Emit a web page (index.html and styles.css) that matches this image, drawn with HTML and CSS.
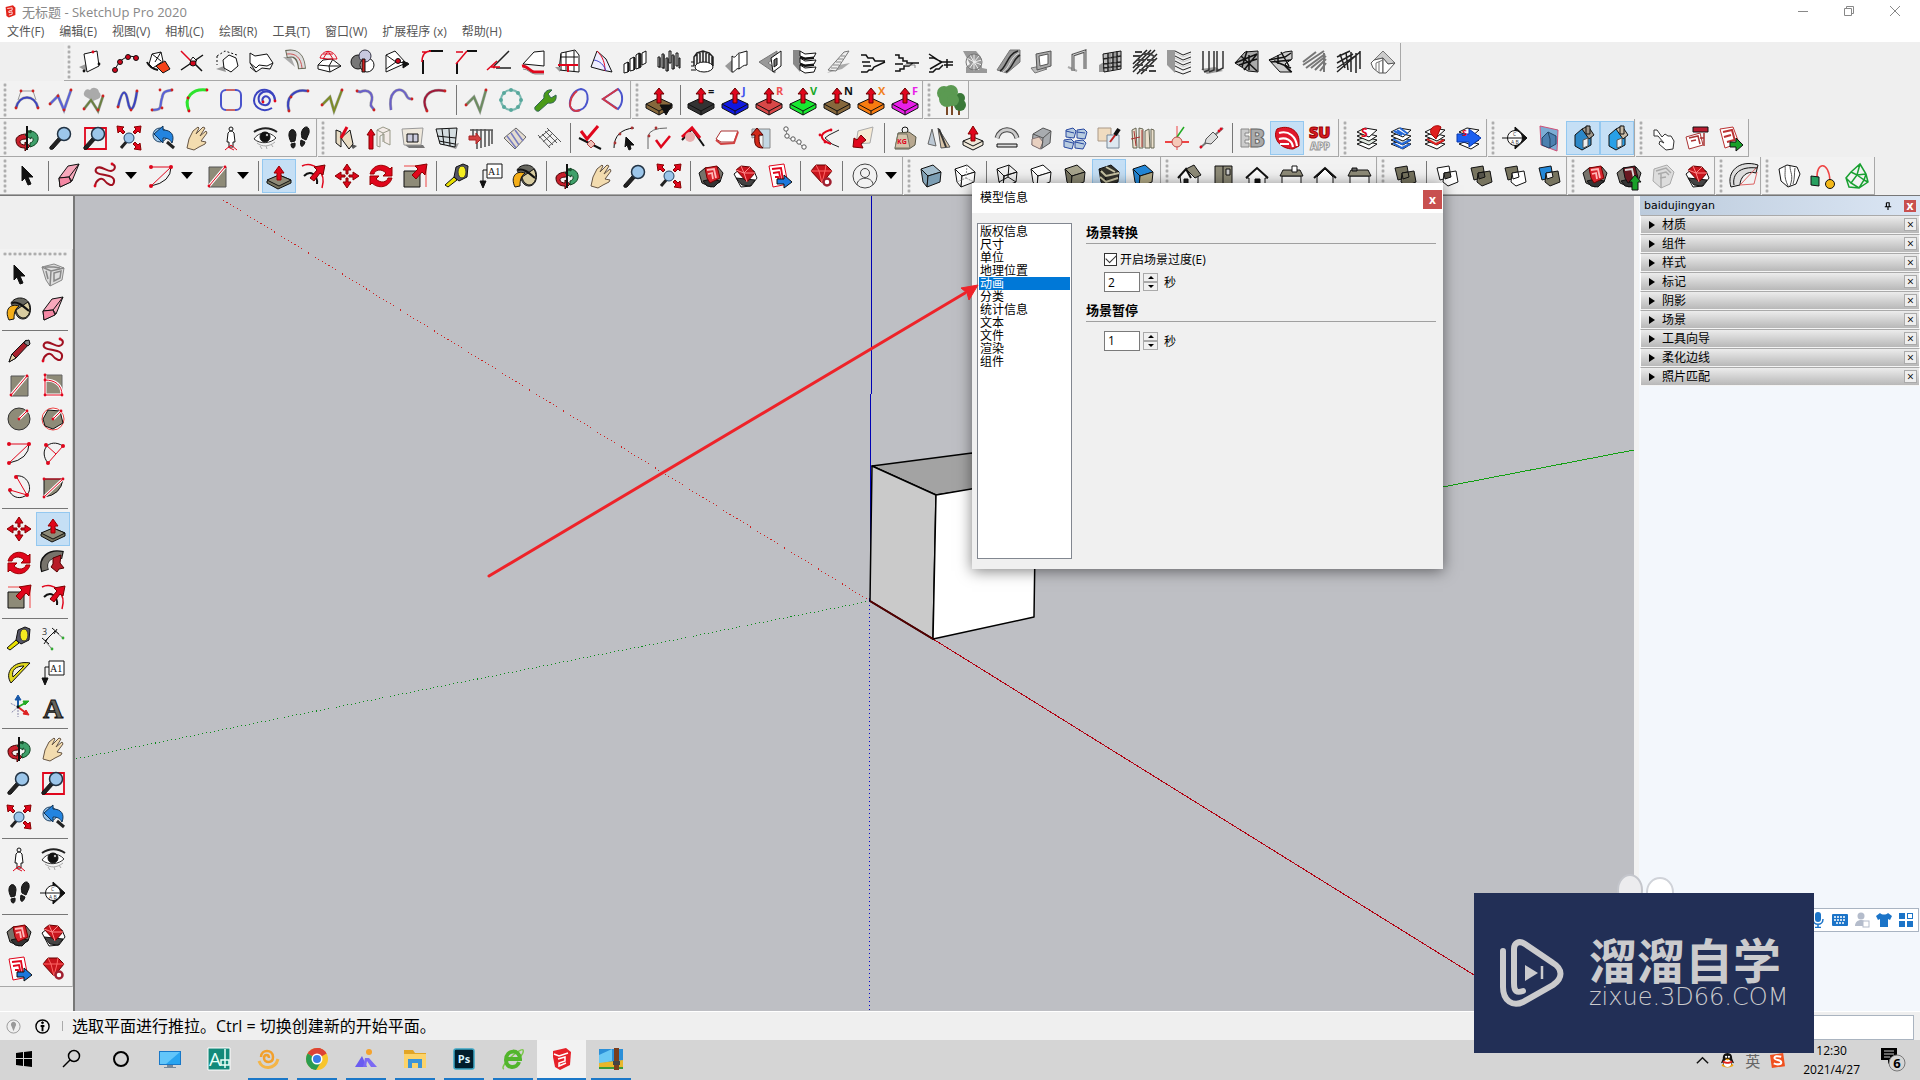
FILE: index.html
```html
<!DOCTYPE html>
<html lang="zh-CN">
	<head>
		<meta charset="utf-8">
		<title>无标题 - SketchUp Pro 2020</title>
		<link rel="stylesheet" href="styles.css">
	</head>
	<body>
		<header class="titlebar">
			<svg class="app-logo" viewBox="0 0 16 16"><path d="M2 3l9-2 3 3v9l-8 3-3-2z" fill="#e2231a"/><path d="M4 5l6-1v3l-4 1v2l4-1v3l-4 1" fill="none" stroke="#fff" stroke-width="1"/></svg>
			<h1 class="app-title">无标题 - SketchUp Pro 2020</h1>
			<div class="window-buttons">
				<button aria-label="最小化"><svg viewBox="0 0 12 12"><path d="M1 6.500h10"/></svg></button>
				<button aria-label="还原"><svg viewBox="0 0 12 12"><path d="M1.500 3.500h7v7h-7zM3.500 3.500v-2h7v7h-2"/></svg></button>
				<button aria-label="关闭"><svg viewBox="0 0 12 12"><path d="M1 1l10 10M11 1L1 11"/></svg></button>
			</div>
		</header>
		<nav class="menubar">
			<button>文件(F)</button>
			<button>编辑(E)</button>
			<button>视图(V)</button>
			<button>相机(C)</button>
			<button>绘图(R)</button>
			<button>工具(T)</button>
			<button>窗口(W)</button>
			<button>扩展程序 (x)</button>
			<button>帮助(H)</button>
		</nav>

		<!-- data-tools: icon names, | is a separator, * marks an active tool, + a drop-down -->
		<div class="toolbars">
			<div class="toolbar-row indented">
				<div class="toolbar" data-tools="sheet nodes fold crossing hexdash slab tube dome sphere cone fillet chamfer angle bend frame sail columns posts ring curtain wallwindow shelves ramp stair1 stair2 stair3 spiralstair escalator screen arch lattice weave louver blinds truss truss2 rafters beams hut"></div>
			</div>
			<div class="toolbar-row">
				<div class="toolbar" data-tools="bezarc polyline cloudline bspline sline greenarc roundrect spiral bluearc olive hook hump redarc | tealline dotring wrench loop wedge"></div>
				<div class="toolbar" data-tools="jpp | jppnormal jppj jppr jppv jppn jppx jppf"></div>
				<div class="toolbar" data-tools="trees"></div>
			</div>
			<div class="toolbar-row">
				<div class="toolbar" data-tools="orbit zoom zoomwindow zoomextents previous pan camera eye walk"></div>
				<div class="toolbar" data-tools="wallcut wallup opening grid fence corrugated rail | checkcorner nodecurve checkround roofpeak redslab bendup chain redbend reddown | weight fin pushup bridge crystal boxes picker books axispick brush | bim wifi* suapp"></div>
				<div class="toolbar" data-tools="layers layersblue layersred layersgo"></div>
				<div class="toolbar" data-tools="section sectionplane sectioncut* sectionfill*"></div>
				<div class="toolbar" data-tools="hand report reportgo"></div>
			</div>
			<div class="toolbar-row">
				<div class="toolbar" data-tools="select | eraser freehand+ arc+ rectangle+ | pushpull* offset move rotate scale | tape text paint | orbit pan zoom zoomextents | warehouse ruby layout | extension | user+"></div>
				<div class="toolbar" data-tools="xray backedges | wireframe hidden shaded textured* mono"></div>
				<div class="toolbar" data-tools="iso top front right back left"></div>
				<div class="toolbar" data-tools="outer | intersect union subtract trim"></div>
				<div class="toolbar" data-tools="warehouse warehouseup component ruby"></div>
				<div class="toolbar" data-tools="rotarc"></div>
				<div class="toolbar" data-tools="shell link gem"></div>
			</div>
		</div>

		<div class="workspace">
			<aside class="side-tools">
				<div class="toolbar vertical" data-tools="select component2 paint eraser | pencil freehand rectangle rotrect circle polygon arc arc2 arc3 pie | move pushpull* rotate followme scale offset | tape dimension protractor text axes text3d | orbit pan zoom zoomwindow zoomextents previous | camera eye walk section | warehouse ruby layout extension"></div>
			</aside>

			<main class="viewport">
				<svg viewBox="75 196 1559 815" preserveAspectRatio="xMidYMid slice">
					<g fill="none" shape-rendering="crispEdges">
						<path d="M870 601L223 200" stroke="#c22" stroke-dasharray="1 3"/>
						<path d="M870 601L75 759" stroke="#0a8a1a" stroke-dasharray="1 3"/>
						<path d="M870 601L869 1011" stroke="#00c" stroke-dasharray="1 3"/>
						<path d="M872 196L870 601" stroke="#0000b4"/>
						<path d="M1034 566L1634 450" stroke="#12a012"/>
						<path d="M933 639L1532 1011" stroke="#b00010"/>
					</g>
					<g stroke="#000" stroke-width="1.500" stroke-linejoin="round">
						<path d="M872 466L972 453L1038 480L936 495z" fill="#a3a3a3"/>
						<path d="M872 466L936 495L933 639L870 601z" fill="#cacaca"/>
						<path d="M936 495L1036 478L1034 617L933 639z" fill="#fff"/>
					</g>
					<path d="M870 601l63 38" stroke="#500" stroke-width="2"/>
				</svg>
			</main>

			<aside class="tray">
				<div class="tray-header">
					<h2>baidujingyan</h2>
					<button class="pin" aria-label="固定"><svg viewBox="0 0 10 10"><path d="M3 1v5M6.500 1v5M3 1h4M1 6h8M5 6v4" fill="none" stroke="#000" stroke-width="1.400"/></svg></button>
					<button class="tray-close">x</button>
				</div>
				<div class="tray-item"><button>材质</button><button class="item-close">×</button></div>
				<div class="tray-item"><button>组件</button><button class="item-close">×</button></div>
				<div class="tray-item"><button>样式</button><button class="item-close">×</button></div>
				<div class="tray-item"><button>标记</button><button class="item-close">×</button></div>
				<div class="tray-item"><button>阴影</button><button class="item-close">×</button></div>
				<div class="tray-item"><button>场景</button><button class="item-close">×</button></div>
				<div class="tray-item"><button>工具向导</button><button class="item-close">×</button></div>
				<div class="tray-item"><button>柔化边线</button><button class="item-close">×</button></div>
				<div class="tray-item"><button>照片匹配</button><button class="item-close">×</button></div>
			</aside>
		</div>

		<footer class="statusbar">
			<svg class="status-icon" viewBox="0 0 16 16" stroke="#999"><circle cx="8" cy="8" r="7" fill="none"/><path d="M8 3a3 3 0 0 1 2 5l-2 5-2-5a3 3 0 0 1 2-5z" fill="#999" stroke="none"/></svg>
			<svg class="status-icon" viewBox="0 0 16 16" stroke="#000"><circle cx="8" cy="8" r="7" fill="none" stroke-width="1.500"/><path d="M8 7v6M6 7.500h4" stroke-width="2" fill="none"/><circle cx="8" cy="4" r="1" fill="#000"/></svg>
			<p>选取平面进行推拉。Ctrl = 切换创建新的开始平面。</p>
			<input class="measure" type="text" aria-label="数值">
		</footer>

		<footer class="taskbar">
			<button class="task" aria-label="开始"><svg viewBox="0 0 24 24"><path d="M4 6l7-1v6H4zM12 5l8-1v7h-8zM4 12h7v7l-7-1zM12 12h8v8l-8-1z" fill="#000"/></svg></button>
			<button class="task" aria-label="搜索"><svg viewBox="0 0 24 24" fill="none" stroke="#000" stroke-width="1.500"><circle cx="14" cy="9" r="5.500"/><path d="M10 13l-7 7"/></svg></button>
			<button class="task" aria-label="Cortana"><svg viewBox="0 0 24 24"><circle cx="12" cy="12" r="7" fill="none" stroke="#000" stroke-width="2"/></svg></button>
			<button class="task" aria-label="此电脑"><svg viewBox="0 0 24 24"><path d="M1 4h22v14H1z" fill="#1878c8"/><path d="M2 5h20v12H2z" fill="#28a4f0"/><path d="M2 5h20L8 17H2z" fill="#62c6fa"/><path d="M9 18h6v2H9zM6 20h12v1H6z" fill="#789"/></svg></button>
			<button class="task" aria-label="CAD"><svg viewBox="0 0 24 24"><path d="M1 1h22v22H1z" fill="#128a7a" stroke="#fff"/><text x="2" y="19" font-size="19" fill="#e8fff8">A</text><path d="M18 2v19M14 13h8v5h-8z" fill="none" stroke="#e8fff8" stroke-width="1.500"/></svg></button>
			<button class="task open" aria-label="浏览器"><svg viewBox="0 0 24 24" fill="none" stroke="#f2a02c" stroke-width="2.500"><path d="M5 10c0-8 12-8 12 0 0 7-9 6-9 1 0-4 5-4 5 0"/><path d="M3 14c3 9 16 9 19-2" stroke="#f4b548" stroke-width="3"/></svg></button>
			<button class="task open" aria-label="Chrome"><svg viewBox="0 0 24 24"><circle cx="12" cy="12" r="11" fill="#f8c52c"/><path d="M12 12L2.500 6.500A11 11 0 0 1 21.500 6.500z" fill="#dd4236"/><path d="M12 1a11 11 0 0 1 9.500 5.500H12z" fill="#dd4236"/><path d="M2.500 6.500A11 11 0 0 0 11 23l5-8-4-3z" fill="#2a9c50"/><circle cx="12" cy="12" r="5.500" fill="#fff"/><circle cx="12" cy="12" r="4" fill="#3b7ce8"/></svg></button>
			<button class="task open" aria-label="看图"><svg viewBox="0 0 24 24"><path d="M1 20L8 9l5 11z" fill="#6a5cf0"/><path d="M9 20l2-9h4l8 9h-6l-4-6-1 6z" fill="#7c6af4"/><circle cx="15" cy="5" r="3" fill="#f5a32c"/></svg></button>
			<button class="task open" aria-label="文件资源管理器"><svg viewBox="0 0 24 24"><path d="M1 3h9l2 3h11v14H1z" fill="#e2a526"/><path d="M1 7h22v14H1z" fill="#fcd36a"/><path d="M5 21v-9h14v9h-4v-5H9v5z" fill="#3d94d8"/></svg></button>
			<button class="task open" aria-label="Photoshop"><svg viewBox="0 0 24 24"><rect x="2" y="2" width="20" height="20" rx="2" fill="#001d2c" stroke="#3aa5c4" stroke-width="1.500"/><text x="12" y="16" text-anchor="middle" font-size="11" font-weight="bold" fill="#d9f4ff">Ps</text></svg></button>
			<button class="task open" aria-label="360浏览器"><svg viewBox="0 0 24 24" fill="none"><path d="M3 22C-3 20 20 0 22 3c1 2-2 6-4 8" stroke="#7cc84c" stroke-width="1.500"/><path d="M6 12h13c0-10-14-10-14 1 0 9 11 9 13 2" stroke="#52b52c" stroke-width="4"/></svg></button>
			<button class="task open active" aria-label="SketchUp"><svg viewBox="0 0 24 24"><path d="M3 4l13-3 5 4-1 13-10 5-5-3-2-10z" fill="#e62129"/><path d="M4 7l5 2 9-3M8 12l7-2v4l-6 2v3l7-3" fill="none" stroke="#fff" stroke-width="1.500"/></svg></button>
			<button class="task open" aria-label="截图"><svg viewBox="0 0 24 24"><path d="M0 2h24v20H0z" fill="#2b8fd8"/><path d="M0 8L13 2v12L0 17z" fill="#69c8f5"/><path d="M0 16l24-3v9H0z" fill="#e8b72c"/><path d="M0 20h24v2H0z" fill="#3a9a3a"/><path d="M15 1h5v22h-5z" fill="#7a3d1c"/><path d="M14 14h7v4h-7z" fill="#444"/></svg></button>
			<div class="tray-icons">
				<button aria-label="显示隐藏的图标"><svg viewBox="0 0 16 16"><path d="M2 11l6-6 6 6" fill="none" stroke="#111" stroke-width="1.500"/></svg></button>
				<button aria-label="QQ"><svg viewBox="0 0 16 16"><ellipse cx="8" cy="13" rx="6" ry="2.500" fill="#f5a30a"/><path d="M8 0c4 0 5 3 5 6l2 5-2-1c-1 6-9 6-10 0l-2 1 2-5c0-3 1-6 5-6z" fill="#111"/><ellipse cx="8" cy="11" rx="4" ry="4" fill="#fff"/><path d="M3 8c3 2 7 2 10 0v2c-3 2-7 2-10 0z" fill="#e2231a"/><circle cx="6.500" cy="4" r="1.200" fill="#fff"/><circle cx="9.500" cy="4" r="1.200" fill="#fff"/><path d="M5 6h6l-3 2z" fill="#f5a30a"/></svg></button>
				<button class="lang">英</button>
				<button aria-label="搜狗输入法"><svg viewBox="0 0 16 16"><path d="M0 2l14-2 2 14-14 2z" fill="#f0501e"/><path d="M12 4c-4-1-8-1-7 2 1 2 7 1 7 4 0 2-4 3-8 1" fill="none" stroke="#fff" stroke-width="2.200"/></svg></button>
				<div class="clock"><time>12:30</time><time>2021/4/27</time></div>
				<button class="notify" aria-label="通知"><svg viewBox="0 0 26 26"><path d="M1 1h16v12h-5l-4 4v-4H1z" fill="#000"/><path d="M4 4h10M4 7h10M4 10h6" stroke="#ccc"/><circle cx="17" cy="16" r="8" fill="#d5d5d5" stroke="#777"/><text x="17" y="21" text-anchor="middle" font-size="13" font-weight="bold">6</text></svg></button>
			</div>
		</footer>

		<section class="dialog">
			<div class="dialog-header">
				<h2>模型信息</h2>
				<button class="dialog-close">x</button>
			</div>
			<div class="dialog-body">
				<div class="pages">
					<button>版权信息</button>
					<button>尺寸</button>
					<button>单位</button>
					<button>地理位置</button>
					<button class="selected">动画</button>
					<button>分类</button>
					<button>统计信息</button>
					<button>文本</button>
					<button>文件</button>
					<button>渲染</button>
					<button>组件</button>
				</div>
				<div class="page">
					<h3>场景转换</h3>
					<label class="check"><input type="checkbox" checked>开启场景过度(E)</label>
					<div class="field">
						<input id="transition" type="text" value="2">
						<span class="spin"><button aria-label="增加"></button><button class="down" aria-label="减少"></button></span>
						<label for="transition">秒</label>
					</div>
					<h3>场景暂停</h3>
					<div class="field pause">
						<input id="delay" type="text" value="1">
						<span class="spin"><button aria-label="增加"></button><button class="down" aria-label="减少"></button></span>
						<label for="delay">秒</label>
					</div>
				</div>
			</div>
		</section>

		<svg class="pointer" viewBox="0 0 500 300"><path d="M8 293L484 10" stroke="#ee2329" stroke-width="3" stroke-linecap="round"/><path d="M497 2l-9 15-2-7-6-5z" fill="#ee2329" stroke="#ee2329"/></svg>

		<div class="ime">
			<button aria-label="语音"><svg viewBox="0 0 16 16"><rect x="5" y="0" width="6" height="10" rx="3" fill="#1b74c8"/><path d="M3 7c0 7 10 7 10 0M8 12v3M5 15.500h6" fill="none" stroke="#1b74c8" stroke-width="1.500"/></svg></button>
			<button aria-label="键盘"><svg viewBox="0 0 16 16"><rect y="2" width="16" height="12" rx="1" fill="#1b74c8"/><path d="M2 5h12M2 8h12M4 11h8" stroke="#fff" stroke-width="1.500" stroke-dasharray="2 1"/></svg></button>
			<button aria-label="账户"><svg viewBox="0 0 16 16" fill="#b4bccb"><circle cx="7" cy="4" r="3.500"/><path d="M1 14c0-8 12-8 12 0z"/><rect x="9" y="9" width="6" height="6" fill="#fff" stroke="#b4bccb"/></svg></button>
			<button aria-label="皮肤"><svg viewBox="0 0 16 16"><path d="M4 1c2 2 6 2 8 0l4 3-2 4-2-1v8H4V7L2 8 0 4z" fill="#1b74c8"/></svg></button>
			<button aria-label="工具箱"><svg viewBox="0 0 16 16" fill="#1b74c8"><rect x="1" y="1" width="6" height="6"/><rect x="9.500" y="1.500" width="5" height="5" fill="#fff" stroke="#1b74c8"/><rect x="1" y="9" width="6" height="6"/><rect x="9" y="9" width="6" height="6"/></svg></button>
		</div>

		<div class="brand">
			<svg class="ears" viewBox="0 0 60 20"><ellipse cx="14" cy="17" rx="12" ry="15" fill="#ececee" stroke="#c4c6cc" stroke-width="2"/><ellipse cx="44" cy="19" rx="13" ry="14" fill="#fff" stroke="#d0d3d9" stroke-width="2"/></svg>
			<svg class="brand-logo" viewBox="0 0 66 68"><g fill="none" stroke="#cbcbcd" stroke-width="6" stroke-linecap="round"><path d="M4 12v36c0 14 10 20 20 15l30-17c10-7 10-16 0-22L26 5C20 1 15 4 15 10v34c0 9 3 10 9 8"/></g><path d="M26 26l13 8-13 8z" fill="#cbcbcd"/><path d="M43 27v13" stroke="#cbcbcd" stroke-width="2.500"/></svg>
			<div class="brand-text">
				<strong>溜溜自学</strong>
				<span>zixue.3D66.COM</span>
			</div>
		</div>

		<script src="icons.js"></script>
		<script src="toolbars.js"></script>
	</body>
</html>
```

FILE: styles.css
```css
* {
	box-sizing: border-box;
}

body {
	margin: 0;
	height: 100vh;
	display: flex;
	flex-direction: column;
	overflow: hidden;
	position: relative;
	background: #efefef;
	color: #000;
	font-family: "Open Sans", "Noto Sans CJK SC", sans-serif;
	font-size: 12px;
}

h1, h2, h3, p {
	margin: 0;
	font-size: 12px;
	font-weight: normal;
}

button {
	padding: 0;
	border: none;
	background: none;
	color: inherit;
	font: inherit;
}

button svg {
	display: block;
}

/* title and menu */

.titlebar {
	display: flex;
	align-items: center;
	height: 22px;
	padding: 0 19px 0 4px;
	gap: 5px;
	background: #fff;
	color: #888;
}

.app-logo {
	width: 13px;
	height: 16px;
}

.app-title {
	flex: 1;
	font-size: 13px;
}

.window-buttons {
	display: flex;
	gap: 34px;
}

.window-buttons svg {
	width: 12px;
	height: 12px;
	fill: none;
	stroke: #888;
}

.menubar {
	display: flex;
	height: 20px;
	background: #fff;
	color: #555;
}

.menubar button {
	padding: 0 8px 0 7px;
	line-height: 20px;
}

/* toolbars */

.toolbars {
	padding-top: 1px;
	border-bottom: 1px solid #777;
}

.toolbar-row {
	display: flex;
	gap: 1px;
	height: 38px;
}

.toolbar-row.indented {
	padding-left: 64px;
}

.toolbar {
	display: flex;
	align-items: center;
	background: #f2f2f2;
	border-right: 1px solid #a8a8a8;
	border-bottom: 1px solid #a8a8a8;
}

.grip {
	width: 10px;
	height: 34px;
	background: radial-gradient(circle, #aaa 1px, transparent 2px) center / 4px 5px;
	background-repeat: repeat-y;
}

.separator {
	width: 8px;
	height: 30px;
	background: linear-gradient(#777, #777) center / 1px 100% no-repeat;
}

.tool {
	display: flex;
	align-items: center;
	justify-content: center;
	width: 34px;
	height: 34px;
}

.tool svg {
	width: 24px;
	height: 24px;
	overflow: visible;
	fill: none;
	stroke: #111;
	stroke-width: 1;
}

.tool.active {
	background: #c5dff5;
	border: 1px solid #94c8f0;
}

.tool.dropdown {
	width: 56px;
	gap: 8px;
	padding-left: 2px;
}

.tool.dropdown::after {
	content: "";
	border: 6px solid transparent;
	border-top: 7px solid #000;
	border-bottom: none;
}

.toolbar.vertical {
	display: grid;
	grid-template-columns: 34px 34px;
	justify-content: center;
	margin-top: 53px;
	border-right-color: #ccc;
}

.vertical .grip {
	grid-column: 1 / 3;
	width: 66px;
	height: 9px;
	background: radial-gradient(circle, #aaa 1px, transparent 2px) center / 5px 4px;
	background-repeat: repeat-x;
}

.vertical .separator {
	grid-column: 1 / 3;
	width: 66px;
	height: 8px;
	background: linear-gradient(#777, #777) center / 100% 1px no-repeat;
}

/* workspace */

.workspace {
	flex: 1;
	min-height: 0;
	display: flex;
}

.side-tools {
	width: 73px;
}

.viewport {
	flex: 1;
	min-width: 0;
	background: #bebfc4;
	border-left: 2px solid #777;
}

.viewport svg {
	display: block;
	width: 100%;
	height: 100%;
}

.tray {
	width: 286px;
	padding-left: 6px;
	background: linear-gradient(90deg, #f2f2f2 5px, #f3f7fc 5px);
}

.tray-header {
	display: flex;
	align-items: center;
	gap: 12px;
	height: 19px;
	padding: 0 4px;
	background: linear-gradient(90deg, #bccbdc, #dbe6f4);
}

.tray-header h2 {
	flex: 1;
	font-family: "DejaVu Sans", sans-serif;
	font-size: 11px;
}

.pin svg {
	width: 8px;
	height: 10px;
}

.tray-close {
	width: 12px;
	height: 12px;
	background: #c8504f;
	color: #fff;
	font-weight: bold;
	line-height: 10px;
}

.tray-item {
	display: flex;
	align-items: center;
	justify-content: space-between;
	height: 19px;
	padding: 0 2px 0 8px;
	border: 1px solid #fff;
	border-top-color: #aaa;
	border-bottom-color: #f4f4f4;
	background: linear-gradient(#ececec, #b8b8b8);
}

.tray-item button {
	display: flex;
	align-items: center;
	gap: 7px;
	line-height: 16px;
}

.tray-item button:first-child::before {
	content: "";
	border: 4px solid transparent;
	border-left: 6px solid #000;
	border-right: none;
}

.tray-item .item-close {
	justify-content: center;
	width: 13px;
	height: 13px;
	border: 1px solid #aaa;
	background: #eee;
}

/* status bar */

.statusbar {
	display: flex;
	align-items: center;
	height: 29px;
	padding: 0 6px;
	gap: 14px;
	border-top: 1px solid #fff;
}

.status-icon {
	width: 15px;
	height: 15px;
}

.statusbar p {
	flex: 1;
	margin-left: -4px;
	padding-left: 12px;
	background: linear-gradient(#aaa, #aaa) 2px center / 1px 10px no-repeat;
	font-size: 16px;
	line-height: 24px;
}

.measure {
	width: 110px;
	height: 25px;
	border: 1px solid #aab4c0;
	background: #fff;
	align-self: flex-end;
}

/* taskbar */

.taskbar {
	display: flex;
	height: 40px;
	background: #d5d5d5;
}

.task {
	display: flex;
	align-items: center;
	justify-content: center;
	width: 49px;
	border-bottom: 2px solid transparent;
}

.task:first-child {
	width: 47px;
}

.task svg {
	width: 24px;
	height: 24px;
}

.task.open {
	background: linear-gradient(#1b78c8, #1b78c8) center bottom / 40px 2px no-repeat border-box;
}

.task.open.active {
	background: linear-gradient(#1b78c8, #1b78c8) center bottom / 49px 2px no-repeat border-box, #f2f2f2;
}

.tray-icons {
	display: flex;
	align-items: center;
	gap: 10px;
	margin-left: auto;
	padding-right: 14px;
}

.tray-icons svg {
	width: 15px;
	height: 15px;
}

.lang {
	font-size: 15px;
	color: #666;
}

.clock {
	display: flex;
	flex-direction: column;
	align-items: center;
	margin-left: 8px;
	line-height: 19px;
}

.notify {
	margin-left: 10px;
}

.tray-icons .notify svg {
	width: 26px;
	height: 26px;
}

/* model info window */

.dialog {
	position: absolute;
	left: 972px;
	top: 183px;
	width: 471px;
	height: 386px;
	display: flex;
	flex-direction: column;
	background: #f0f0f0;
	box-shadow: 0 2px 14px rgba(0, 0, 0, 0.5);
}

.dialog-header {
	display: flex;
	justify-content: space-between;
	height: 30px;
	padding: 7px 1px 0 8px;
	background: #fff;
	line-height: 15px;
}

.dialog-close {
	width: 19px;
	height: 19px;
	background: #c8504f;
	color: #fff;
	font-weight: bold;
	line-height: 16px;
}

.dialog-body {
	flex: 1;
	display: flex;
	gap: 14px;
	padding: 10px 7px 10px 5px;
}

.pages {
	width: 95px;
	padding: 1px;
	border: 1px solid #828790;
	background: #fff;
}

.pages button {
	display: block;
	width: 100%;
	height: 13px;
	padding-left: 1px;
	line-height: 13px;
	text-align: left;
}

.pages .selected {
	background: #0078d7;
	color: #fff;
}

.page {
	flex: 1;
}

.page h3 {
	height: 21px;
	border-bottom: 1px solid #a0a0a0;
	font-size: 13px;
	font-weight: bold;
	line-height: 18px;
}

.check {
	display: flex;
	align-items: center;
	gap: 3px;
	height: 28px;
	padding: 2px 0 0 18px;
}

.check input {
	appearance: none;
	width: 13px;
	height: 13px;
	margin: 0;
	border: 1px solid #333;
	background: #fff;
	display: grid;
	place-items: center;
}

.check input:checked::before {
	content: "";
	width: 9px;
	height: 5px;
	border: solid #333;
	border-width: 0 0 1px 1px;
	transform: rotate(-45deg) translate(1px, -1px);
}

.field {
	display: flex;
	align-items: center;
	gap: 3px;
	height: 29px;
	padding: 0 0 9px 18px;
}

.field.pause {
	height: 38px;
	padding-bottom: 1px;
}

.field input {
	width: 36px;
	height: 20px;
	padding: 0 3px;
	border: 1px solid #7a7a7a;
	font: inherit;
}

.field label {
	padding-left: 3px;
}

.spin {
	display: grid;
	gap: 0;
}

.spin button {
	display: grid;
	place-items: center;
	width: 15px;
	height: 9px;
	border: 1px solid #aaa;
}

.spin button::before {
	content: "";
	border: 3px solid transparent;
	border-top: none;
	border-bottom: 3px solid #000;
}

.spin .down::before {
	transform: rotate(180deg);
}

/* things floating over the window */

.pointer {
	position: absolute;
	left: 481px;
	top: 283px;
	width: 500px;
	height: 300px;
	pointer-events: none;
}

.ime {
	position: absolute;
	right: 1px;
	top: 908px;
	display: flex;
	align-items: center;
	gap: 6px;
	height: 24px;
	padding: 0 4px;
	border: 1px solid #a9b4c2;
	background: #fff;
}

.ime svg {
	width: 16px;
	height: 16px;
}

.brand {
	position: absolute;
	left: 1474px;
	top: 893px;
	width: 340px;
	height: 160px;
	display: flex;
	align-items: center;
	gap: 24px;
	padding-left: 25px;
	background: #222f56;
	color: #cbcbcd;
}

.ears {
	position: absolute;
	left: 142px;
	bottom: 100%;
	width: 60px;
	height: 20px;
}

.brand-logo {
	width: 66px;
	height: 68px;
}

.brand-text {
	display: flex;
	flex-direction: column;
}

.brand-text strong {
	font-size: 48px;
	line-height: 48px;
}

.brand-text span {
	font-family: "DejaVu Sans", sans-serif;
	font-size: 24px;
	font-weight: 200;
	line-height: 24px;
}
```

FILE: icons.js
```js
const RED = '#e0061c';
const TAUPE = '#8e8b78';

const dots = (color, ...points) => points.map(([x, y]) => `<circle cx="${x}" cy="${y}" r="1.400" fill="${color}" stroke="none"/>`).join('');
const line = (d, color = '#111', width = 1) => `<path d="${d}" stroke="${color}" stroke-width="${width}"/>`;
const shape = (d, fill, stroke = '#111') => `<path d="${d}" fill="${fill}" stroke="${stroke}"/>`;
const label = (text, x, y, size, color = '#111') => `<text x="${x}" y="${y}" font-size="${size}" font-weight="bold" fill="${color}" stroke="none">${text}</text>`;
const curve = (d, color, ...points) => line(d, '#aaa', 3) + line(d, color, 2) + dots('#c22', ...points);

// push/pull slab with a red arrow, used by the whole joint push/pull family
const slab = (color, mark = '', markColor = '#111') =>
	shape('M-1 16l13-6 13 6v4l-13 7-13-7z', color) + line('M-1 16l13 7 13-7M12 23v4') +
	shape('M12 0l5 6h-3v9h-4V6H7z', RED, '#600') + (mark && label(mark, 19, 7, 11, markColor));

const glass = shape('M1 21l9-10 3 2L4 23c-2 1-4 0-3-2z', '#222') + '<circle cx="15" cy="8" r="6.500" fill="#9cc6ea" stroke="#234" stroke-width="1.500"/>';
const sheets = (top) => shape('M2 18l8-3 12 3-8 5z', '#fff') + shape('M2 14l8-3 12 3-8 5z', '#dfe7df') + shape('M2 10l8-3 12 3-8 5z', '#fff') + shape('M2 6l8-4 12 2-8 7z', '#fff') + top;
const box = (a, b, c) => shape('M2 5l12-4 8 7-13 4z', a) + shape('M2 5l7 7-1 11-4-5z', b) + shape('M9 12l13-4-1 10-13 5z', c);
const merged = (a, b, c) => shape('M2 4l12-2 2 11-11 3z', a) + shape('M9 9l12-2 2 11-10 4-5-4z', b) + shape('M9 9l6-1 1 5-6 2z', c);
const arrowHeads = shape('M0 0l7 1-2 2 3 3-2 2-3-3-2 2zM24 0l-7 1 2 2-3 3 2 2 3-3 2 2zM24 24l-7-1 2-2-3-3 2-2 3 3 2-2z', RED, '#800');
const pod = shape('M0 9l6-5 13-1 5 6-3 9-9 5-9-4z', '#77736b') + shape('M4 17l8-2 9 2-6 6-7-1z', '#333');
const house = (roof, wall) => shape('M4 9l7-6 9 5v11l-9 5-7-4z', wall) + shape('M11 3l6-3 6 9-5 4z', roof) + shape('M15 0h4v8h-4z', roof) + shape('M12 14l5-2v8l-5 2z', '#eee', '#555');
const layoutPage = shape('M2 2l15-2 4 20-15 3z', '#fff', RED) + line('M5 5l9-1 2 12M6 9l6-1 2 9M8 13l3 0 1 5', RED, 1.8);

const icons = {
	sheet: shape('M0 17l7-3v7z', '#999', 'none') + shape('M5 4l13-3 2 15-12 6z', '#fff') + dots('#111', [5, 21], [20, 14]) + dots(RED, [14, 2]),
	nodes: line('M2 19L7 11l8-5 9 1') + '<g fill="#d0061c"><circle cx="2" cy="20" r="2.500"/><circle cx="7" cy="12" r="2.500"/><circle cx="15" cy="7" r="2.500"/><circle cx="23" cy="8" r="2.500"/></g>',
	fold: shape('M2 14L5 4l9-2 2 9-10 7z', '#fff') + line('M5 4l9 7M14 2L8 12') + line('M0 12c2 5 6 7 11 8', '#111', 2) + shape('M9 16l9-5 5 8-7 4z', '#f5431a'),
	crossing: line('M0 20L22 5M12 12l9 9', '#111', 1.5) + line('M0 1l12 12', RED, 1.5) + '<circle cx="12" cy="13" r="3" fill="#d0061c"/>' + shape('M9 11l3-4 4 4z', '#fff'),
	hexdash: shape('M1 19l8-3 2 6z', '#999', 'none') + shape('M8 10l6-5 7 3 2 8-7 6-7-4z', '#fff') + '<path d="M2 6l8-5 12 4M2 6v9" stroke-dasharray="2 2"/>',
	slab: shape('M1 13V3l5 3 12-2 6 9-3 6-8-1-6 4z', '#fff') + line('M1 13l6 5 3-3 8 1 6-3M1 17l6 5'),
	tube: shape('M0 7h8l4 10z', '#aaa', 'none') + line('M3 4c9-2 15 2 16 15', '#665', 8) + line('M4 4c9-2 14 2 15 14', '#ddd', 6) + line('M4 4c9-1 14 4 15 14', '#c55'),
	dome: shape('M1 15l5-5 9-1 9 7-11 6-12-3z', '#fff') + line('M1 15l11 1 4-7M12 16l1 6M12 16l12 0') + line('M3 8c3-9 14-9 17 1M3 8l8 1 9 0M6 9L11 1l5 8M6 4l10 0', RED),
	sphere: '<circle cx="7" cy="12" r="7" fill="#777"/><circle cx="16" cy="15" r="7" fill="#fff"/><circle cx="14" cy="6" r="6" fill="#c8c8e0" stroke="#334"/>' + shape('M11 9h3v13h-3z', '#c22'),
	cone: shape('M1 5l9-4 11 12L1 22z', '#fff') + line('M1 5l10 7 12 1M1 19l10-7') + '<circle cx="13" cy="11" r="2.500" fill="#d0061c"/>' + shape('M18 11l6 3-6 4z', '#111'),
	fillet: line('M4 24V10M10 1h14', '#111', 2) + line('M3 12Q3 1 12 1M3 2h5', RED, 1.5),
	chamfer: line('M4 24V13M14 1h10', '#111', 2) + line('M3 14L14 1M3 2h7', RED, 1.5),
	angle: line('M7 16L22 1M9 18h15', '#222', 1.5) + line('M0 20l10-9M4 17h9', RED, 1.5) + dots(RED, [7, 17]),
	bend: shape('M2 14L13 2l10-1v15l-10-1z', '#fff') + line('M1 16c5-1 8 6 12 6h10', RED, 3) + line('M2 19c5 0 8 5 12 5h9', '#888'),
	frame: shape('M4 20L6 3l14-3 4 5v17z', '#fff') + line('M6 4v16M11 2v18M19 1v20M6 7h17') + shape('M0 17h5v5z', '#999', 'none') + line('M3 15h20M13 15v7', RED, 2),
	sail: shape('M2 17L8 1l9 8 6 13-10-2z', '#eef') + line('M8 1c6 6 8 12 8 20', RED) + line('M5 10c6 1 10 5 12 11', '#44c'),
	columns: shape('M1 14l4-2v10l-4 1zM7 9l4-2v13l-4 1zM13 5l3-2v15l-3 1zM19 3l4-2v12l-4 2z', '#fff') + shape('M5 12l1 1v8l-1 1zM11 7l1 1v11l-1 1zM16 3l2 1v13l-2 1z', '#333'),
	posts: shape('M1 7h2v10H1zM5 4h2v14H5zM9 8h2v13H9zM12 1h2v12h-2zM15 5h2v14h-2zM19 3h2v13h-2zM22 8h1v10h-1z', '#ccc') + line('M3 8v10M7 5v14M11 9v12M17 6v13', '#111', 1),
	ring: line('M3 16V7l3-4 6-2 6 2 4 4v9M6 15V4M9 13V2M12 13V1M15 13V2M18 14V4M21 15V6', '#222', 1.5) + '<ellipse cx="13" cy="17" rx="9" ry="5" fill="#fff"/>' + line('M0 12h3M0 16h3M0 20h5'),
	curtain: shape('M0 16l7-6v13z', '#999', 'none') + shape('M7 6c4 4 5-4 8-3l7-2v14c-4 0-5 2-8 4-3-2-4 4-7 3z', '#fff') + line('M14 4v15'),
	wallwindow: shape('M0 12L18 1v5L9 13l7 5v5z', '#999', '#777') + shape('M12 8l10-7v15l-8 6z', '#fff') + shape('M15 10l3-2v7l-3 2z', '#777'),
	shelves: shape('M0 0h7v22L0 14z', '#888', 'none') + shape('M7 1l5 3 11-1-2 4-9 1-5-2zM7 8l5 3 11-1-2 4-9 1-5-2zM7 15l5 3 11-1-2 5-9 1-5-3z', '#fff') + line('M7 7l5 2 9-1M7 14l5 2 9-1', '#111', 2),
	ramp: shape('M12 15l11-2-8 6-15 4z', '#aaa', 'none') + shape('M1 20L17 2l5-1L9 21z', '#eee', '#777') + line('M4 18h6M6 15h6M9 12h5M11 9h5M14 6h4', '#888'),
	stair1: line('M0 5h5l2 3h5l2 3h10M0 22h6l2-2h3l2-3 11-5M1 12h8M2 16h8', '#111', 1.5),
	stair2: line('M0 5h4v3h4v3h4v2h12M0 21h5v-2h4v-3h5l4-3M0 14h8', '#111', 1.5) + line('M10 15h10v3', '#888'),
	stair3: line('M0 4l12 8h12M0 22h4l3-3h3l4-4M0 8h5l8 4-12 7M15 15h9M18 9v9', '#111', 1.5),
	spiralstair: shape('M0 1h13l5 6 1 11 5 1v4H3v-6l4-3z', '#999', 'none') + line('M11 12L4 8M11 12L7 5M11 12V4M11 12l5-6M11 12l8-2M11 12l8 3M11 12l5 8M11 12v9M11 12l-5 7', '#eee') + '<circle cx="11" cy="12" r="8" stroke="#777"/>',
	escalator: shape('M0 20L13 0h10v12L10 23z', '#999', '#777') + line('M3 21c7-4 7-17 18-20M9 22c7-4 7-13 14-17', '#222', 1.5) + line('M6 22c7-4 7-15 16-19', '#ddd'),
	screen: shape('M0 18l10-2 6 3-12 4z', '#bbb', '#777') + shape('M5 4l15-3v15L6 20z', '#aaa', '#555') + shape('M8 6l9-2v10l-8 2z', '#fff', '#555'),
	arch: line('M3 17l9 4', '#aaa', 2) + line('M8 21V5l12-4v18', '#555', 3) + line('M8 21V5l12-4v18', '#ccc'),
	lattice: shape('M0 15l5-3v10H0z', '#999', 'none') + shape('M4 4l18-3v18L5 22z', '#bbb') + line('M9 3v18M14 2v18M18 1v18M4 9l18-3M4 14l18-2M4 18l18-2', '#222', 1.5) + line('M11 3v18M16 2v18', '#777'),
	weave: line('M0 22L22 0M0 14L14 0M8 24L24 8M0 18L18 0M4 24L24 4', '#222', 1.5) + line('M0 6h8M10 4h8M4 10h8M14 10h8M2 15h8M12 16h9M6 20h8M16 21h7M16 3l6 4M2 2h7', '#444', 2),
	louver: shape('M0 0h8v23L0 15z', '#999', 'none') + line('M8 1l8 4 8-3M8 6l8 4 8-3M8 11l8 4 8-3M8 16l8 4 8-3M8 21l8 3 8-3', '#222') + line('M8 3l8 4 8-3M8 8l8 4 8-3M8 13l8 4 8-3', '#ccc'),
	blinds: shape('M0 19l14-2 8 4-16 3z', '#999', 'none') + line('M2 1v19M8 1v19l-5 2M13 1v19l-5 2M22 1v17l-6 3V1', '#333', 1.5),
	truss: shape('M0 13L10 2l13-1v21l-10-1z', '#aaa') + line('M0 13L22 4 9 20M6 6l16 15M12 1l-5 16M22 9L4 15M14 5v15', '#111', 1.5),
	truss2: shape('M0 10L16 2l7-1v8l-7 5 7 8H11z', '#ccc') + line('M0 10l16-3 6-4M5 11L22 18M9 5v9M2 12l20-2M15 15l7 7M12 2l8 14', '#111', 1.5),
	rafters: line('M0 15L21 1M3 18L22 4M8 18L23 6M12 20L23 9M17 21l6-8M21 22V3M0 12L13 2', '#777', 2),
	beams: line('M0 22L23 2M0 7L13 1M0 13L16 4M3 4l5 14M9 2l2 18M14 2v20M19 3v20M23 1v18M0 18L18 6', '#222', 1.5),
	hut: shape('M12 1l12 12-7 1-5-6-9 2z', '#ccc', '#777') + shape('M0 13l3-3 9-2v15H8l-6-5z', '#fff', '#555') + shape('M12 8l5 6 7-1-9 10h-3z', '#fff', '#555') + line('M5 13v7M5 13l7-3M8 12v11', '#777'),

	bezarc: curve('M1 20C4 6 20 6 23 20', '#3a43c0', [1, 20], [23, 20]) + line('M6 3h12M6 3l-3 9M18 3l3 9', '#999') + dots('#c22', [6, 3], [18, 3]),
	polyline: curve('M1 16l8-8 6 14L22 2', '#5860d8', [1, 16], [9, 8], [15, 22], [22, 2]),
	cloudline: shape('M3 9a4 4 0 0 1 4-7 5 5 0 0 1 9 2 4 4 0 0 1-1 7l-5 2z', '#aaa', 'none') + curve('M1 21l7-9 7 11 5-15', '#6a8040', [1, 21], [15, 22], [20, 8]),
	bspline: curve('M1 19C6-2 9 3 11 14s6 10 9-11', '#3a43c0', [1, 19], [14, 22], [20, 3]),
	sline: curve('M1 22c12 0 7-4 10-12 1-7 4-7 10-8', '#5860d8', [1, 22], [11, 20], [9, 2], [21, 2]),
	greenarc: line('M4 23C-2 9 8 0 22 2', '#2ee42e', 3) + dots(RED, [4, 23], [22, 2], [3, 10]),
	roundrect: '<rect x="2" y="2" width="20" height="20" rx="5" stroke="#4a54cc" stroke-width="2"/>' + line('M7 2h9M7 22h9', '#c66', 2),
	spiral: line('M10 14c-2-4 2-7 5-5 4 3 1 9-4 8C4 16 4 7 10 4c6-2 12 2 12 9', '#3a43c0', 2) + line('M22 13C22 0 6-2 2 8s7 18 17 12', '#3a43c0', 2) + dots(RED, [10, 14], [22, 13]),
	bluearc: curve('M2 23C-2 10 7 0 21 3', '#3a43c0', [2, 23], [4, 9], [21, 3]),
	olive: curve('M1 17l8-8 4 14L21 2', '#7c8c28', [1, 17], [21, 2]),
	hook: curve('M2 3l3 1c10-4 14 3 11 11-1 4 1 3 3 7', '#6a60c8', [2, 3], [19, 22]),
	hump: curve('M2 22C-1 3 9 0 14 3s2 8 9 8', '#6a60c8', [23, 11]),
	redarc: curve('M4 23C-3 9 6 0 22 3', '#a01838', [4, 23], [22, 3]),
	tealline: curve('M1 17l8-8 6 14L21 2', '#6c8c60', [1, 17], [21, 2]),
	dotring: '<circle cx="12" cy="12" r="10" stroke="#7ab8b0" stroke-width="2"/><g fill="#58a89c" stroke="none"><circle cx="12" cy="2" r="2"/><circle cx="12" cy="22" r="2"/><circle cx="2" cy="12" r="2"/><circle cx="22" cy="12" r="2"/><circle cx="5" cy="5" r="2"/><circle cx="19" cy="5" r="2"/><circle cx="5" cy="19" r="2"/><circle cx="19" cy="19" r="2"/></g>',
	wrench: shape('M2 19l9-9c-1-5 3-9 8-8l-4 4 3 4 5-3c1 6-3 9-8 8l-9 8c-3 1-5-2-4-4z', '#4a9a18', '#365'),
	loop: line('M3 18C2 10 7 2 14 1c10 1 8 19-1 21C7 24 4 22 3 18', '#4a54cc', 2) + line('M3 18c0-7 3-12 7-15M13 22c-4 2-8 1-10-4', '#d03848', 2),
	wedge: line('M2 11L17 1c6 5 5 15 0 20z', '#4a54cc', 2) + line('M17 1L2 11l14 10', '#d03848', 2),

	jpp: slab('#86683c') + shape('M13 17h12l-6 10z', '#111'),
	jppnormal: slab('#333', '=', '#111'),
	jppj: slab('#1018e0', 'J', '#4455ee'),
	jppr: slab('#d84848', 'R', '#f05050'),
	jppv: slab('#18e830', 'V', '#18a828'),
	jppn: slab('#86683c', 'N', '#111'),
	jppx: slab('#f87c10', 'X', '#f08020'),
	jppf: slab('#e820e8', 'F', '#e820e8'),
	trees: line('M8 12v15M20 15v12M13 12v15', '#7a4a28', 2) + '<g fill="#3a7838" stroke="none"><circle cx="21" cy="10" r="5"/><circle cx="21" cy="17" r="6"/></g><g fill="#5b9a52" stroke="none"><circle cx="5" cy="5" r="7"/><circle cx="12" cy="4" r="7"/><circle cx="8" cy="11" r="8"/><circle cx="14" cy="12" r="6"/></g>',

	orbit: shape('M12 8v5c-5 0-7 1-7 3s3 3 5 3v-3l5 4-5 5v-3C4 22 1 19 1 14c0-3 4-6 11-6z', '#c8202c', '#400') + shape('M12 5c8-1 12 4 11 9-1 4-4 6-8 7v-4c4-1 4-5 1-6v2l-6-4 6-5v3z', '#3fa06a', '#142') + line('M12 0v24', '#111', 2),
	zoom: glass,
	zoomwindow: line('M2 2h21v21H2z', RED, 1.8) + glass,
	zoomextents: line('M4 22l6-7', '#222', 3) + arrowHeads + '<circle cx="12" cy="12" r="5" fill="#9cc6ea" stroke="#246"/>',
	previous: line('M16 16l7 6', '#222', 3) + '<circle cx="9" cy="9" r="7" fill="#9cc6ea" stroke="#246"/>' + shape('M3 8l9-8v4c8 0 12 5 9 13-2-4-5-5-9-5v5z', '#2384e0', '#135'),
	pan: shape('M2 22L4 13 8 5l5-4 1 1-3 6 7-7 2 1-5 8 6-5 1 2-6 8 5 1-1 2-6 3-5 3z', '#f3dcaf', '#654'),
	camera: '<circle cx="12" cy="3" r="2"/>' + shape('M9 7q3-4 6 0l1 9h-2v5h-4v-5H8z', '#fff') + line('M6 24l6-5 6 5M9 21l6 3', RED),
	eye: line('M1 6C8 1 17 1 24 6', '#222', 2) + shape('M1 13C6 5 17 5 23 12c-5 5-15 7-22 1z', '#fff', '#333') + '<circle cx="12" cy="11" r="5" fill="#111"/><circle cx="14" cy="9" r="1.500" fill="#fff"/>' + line('M4 17c5 4 12 4 18-1M7 20l2 3M13 20l1 3M18 18l2 3', '#aaa'),
	walk: shape('M3 5c2-3 6-1 6 4l-1 6-4 1C2 12 1 8 3 5zM4 18l4-1c1 6-4 7-4 1z', '#222') + shape('M16 3c3-4 7-2 6 4l-3 7-4-2c-1-4-1-6 1-9zM14 14l4 2c-2 7-6 5-4-2z', '#222'),

	wallcut: shape('M16 17l8 3-4 3z', '#555', 'none') + shape('M3 4l5 2v15l-5-4zM8 12l9-8 3 14-4 5z', '#e8dcc4') + line('M14 1l-6 11', RED, 3),
	wallup: shape('M10 4l6-3 7 3v15l-6-3v-8l-4 2v11l-3-1z', '#f4ece8', '#998') + line('M10 4l6 3 7-3M16 7v9', '#998') + shape('M4 3l4 6H6v14H2V9H0z', RED, '#800'),
	opening: shape('M4 19h18l2 3H8z', '#777', 'none') + shape('M1 3l21-1-2 17H3z', '#eee8dc', '#999') + shape('M6 8h11v8H6z', '#ccd') + line('M12 8v8'),
	grid: shape('M12 20l12-3-3 6z', '#999', 'none') + shape('M1 3l21-1-2 19-15-3z', '#d4dde0') + line('M2 10l19 2M7 3l2 16M14 3l1 17M4 15l16 3'),
	fence: line('M1 4h23M4 3v11M8 3v20M12 3v19M16 3v18M20 4v16M23 4v14', '#555', 1.6) + shape('M0 10h7V7l5 6-5 5v-4H0z', '#d04040', '#a22'),
	corrugated: shape('M1 12L13 2l10 9-11 12z', '#e4dcd0', '#666') + line('M4 10l9 12M8 7l8 12M12 4l8 11', '#777cc0', 1.5),
	rail: line('M1 9l12 13M10 2l14 14M5 8l11 11M8 5l12 12M2 12l10-8M6 16L16 7M11 21l9-8', '#555'),
	checkcorner: line('M0 12l22 11', '#111', 2) + line('M2 5l6 8L19 0', RED, 3) + shape('M8 18l4-4 4 4-4 4z', '#f0c0b8', '#a44'),
	nodecurve: line('M1 22C1 10 8 3 21 2') + dots('#a33', [2, 17], [7, 8], [19, 2]) + shape('M13 11l8 8-4 0 1 4-2 1-2-5-2 2z', '#111'),
	checkround: line('M1 23V10Q3 2 20 2', '#666') + dots('#a33', [2, 10], [9, 2]) + line('M9 14l5 7L23 10', RED, 2.5),
	roofpeak: line('M1 14L11 3l12 17', '#111', 2) + line('M1 11L11 2l8 10', RED, 3) + '<circle cx="9" cy="11" r="5" fill="#e8b0b0" stroke="none"/>',
	redslab: shape('M1 13L6 5h17l-4 11H6z', '#fff', '#a33') + line('M1 14l5 4 13-1L23 6', '#d04040', 2),
	bendup: shape('M3 3h18v19h-7V9L3 12z', '#c4d8e4', '#888') + shape('M2 9l6-7 6 7h-4c0 8 0 9 4 13-8 0-9-4-8-13z', '#d02818', '#500'),
	chain: line('M3 2l1 9 6 3 6 3 6 6', '#888') + '<g fill="#fff" stroke="#555"><circle cx="3" cy="3" r="2.200"/><circle cx="4" cy="10" r="2.200"/><circle cx="10" cy="13" r="2.200"/><circle cx="16" cy="16" r="2.200"/><circle cx="21" cy="21" r="2.200"/></g>',
	redbend: line('M22 4l-10 5-4 3 7 6 7 3', '#222') + line('M13 4C1 8 3 14 14 18', RED, 2) + dots(RED, [14, 4], [3, 9], [8, 16]),
	reddown: shape('M7 5l15-4-3 16-14 1z', '#f6ead4', '#aaa') + shape('M10 9l5 5-5 4 2 4-10-1 1-9 3 2z', RED, '#700'),
	weight: '<circle cx="12" cy="4" r="3"/>' + shape('M5 7l11-1 7 5-1 8-6 4H2z', '#b8a890', '#554') + shape('M5 8h9l3 14H2z', '#d4c4ac', '#776') + label('KG', 4, 18, 7, RED),
	fin: shape('M5 3l4 17-8-2z', '#bcc8d4', '#666') + shape('M11 2l12 19-9 1z', '#d8c4a8', '#555') + line('M12 3l7 18', '#333', 2),
	pushup: shape('M2 15l10-4 10 4v4l-10 5-10-5z', '#f0e8d8') + line('M2 15l10 5 10-5') + shape('M12 0l5 8h-3v7h-4V8H7z', RED, '#800'),
	bridge: line('M2 12c3-11 17-11 20 0', '#444', 5) + line('M2 12c3-11 17-11 20 0', '#ccc', 3) + shape('M2 18h20v3H2z', '#ddd'),
	crystal: shape('M4 8l10-6 8 3-1 12-9 6-9-4z', '#a8acb0', '#555') + shape('M3 13l7-2 4 5-3 7-8-4z', '#e8d0c0', '#877') + line('M4 8l10 4 8-7M14 12l-1 10', '#555'),
	boxes: shape('M3 4l7-2 3 3-2 7-8-1zM14 4l7-1 3 3-2 7-8-1zM1 14l7-1 3 3-2 7-8-2zM12 15l8-1 3 3-3 6-8-1z', '#b8cce0', '#2848a0') + line('M3 5l8 2M14 6l8 1M2 15l8 2M12 16l9 2', '#2848a0'),
	picker: shape('M1 2h13v13H1z', '#f0dcc0', '#a98') + shape('M10 9h12v13H10z', '#dde8f0', '#789') + line('M13 16l6-8', '#b22', 2) + line('M18 9l4-6', '#111', 4),
	books: shape('M1 4l4-2 1 20H2zM8 2l4 1v19H8zM14 5l4-2 1 19h-5zM20 3l3 1v18h-3z', '#eadfcc', '#665') + line('M3 5l2 15M0 13l9-2M11 4v17', '#a33'),
	axispick: line('M12 12V0M12 12v12', '#e44') + line('M12 11l7-10', '#2a2', 1.5) + line('M0 16h24', '#e44', 2) + '<circle cx="12" cy="16" r="5" fill="#f5c8b8" stroke="#b44"/>',
	brush: line('M1 22L24 2', '#777', 2) + shape('M7 13l7-7 5 5-7 7-6-1z', '#ddd', '#555') + dots(RED, [2, 21], [22, 3], [20, 5]),
	bim: shape('M0 3h8v4H4v3h4v4H4v3h4v4H0z', '#ccc', '#888') + '<text x="8" y="21" font-size="24" font-weight="900" fill="#aaa" stroke="#666">B</text>',
	wifi: shape('M2 3c12-5 22 2 22 12v5l-6 3C5 23-3 12 2 3z', '#e0182c', '#a00') + line('M5 18h9M4 13c7-2 13 1 14 8M4 7c10-3 17 4 18 13', '#fff', 2.2),
	suapp: '<text x="0" y="12" font-size="16" font-weight="900" fill="#d81820" stroke="#900">SU</text><text x="1" y="24" font-size="10" font-weight="900" fill="#fff" stroke="#999">APP</text>',
	layers: sheets(label('S', 6, 11, 12, RED)),
	layersblue: sheets(line('M5 5l8 4M8 4l8 5M11 2l8 6M4 13l9 5 8-4M4 17l9 5 8-4', '#2468d8', 2)),
	layersred: sheets(shape('M9 9c-5-6 4-12 9-8l-5 12z', '#e02020', '#a00') + line('M4 13l9 5 8-4', '#e02020', 2)),
	layersgo: sheets(shape('M0 8h12V3l12 9-12 9v-5H0z', '#1c60f0', '#0838b0') + label('S', 5, 10, 9, RED)),

	section: shape('M12 1l12 11-12 11z', '#111') + '<circle cx="12" cy="12" r="7.500" fill="#fff"/>' + line('M-1 12h22') + '<text x="10" y="10" font-size="5" fill="#333" stroke="none">C</text><text x="8" y="18" font-size="5" fill="#333" stroke="none">A B</text>',
	sectionplane: shape('M3 0l18 4-1 21L4 19z', '#7cacd4', '#d05078') + shape('M5 12l6-6 8 4v8l-7 4-7-3z', '#4c80b0', '#246') + line('M11 6l2 7v9', '#246'),
	sectioncut: house('#a0988c', '#2c88c8'),
	sectionfill: house('#c8bca8', '#28a0e8'),
	hand: shape('M3 4l3 0 5 7 3-3 3 2 3 0 3 5-1 8-7 1-7-6 1-3 4 2-6-7-4 0z', '#fff', '#333'),
	report: shape('M8 1h15v5H8z', '#b81c30') + shape('M1 11l14-4 3 12-14 4z', '#fff', '#a33') + line('M4 12l9-2 2 8M6 15l5-1M19 7v13M19 12h-4', '#a33', 1.5),
	reportgo: shape('M1 3l13-2 6 16-14 5z', '#fff', '#b33') + line('M4 6l9-2 3 11M5 11l7-2M8 16l7-2', '#b33', 2) + shape('M11 16h6v-4l7 7-7 6v-4h-6z', '#18a028'),

	select: shape('M7 2l11 11h-5l3 7-3 1-3-7-3 3z', '#111', '#111'),
	eraser: shape('M2 14L11 2l11-2-7 17-12 6z', '#f7a8bc') + line('M2 14l10-1L22 0M12 13l3 4', '#111') + shape('M2 14l10-1 2 5-11 5z', '#f488a4'),
	freehand: line('M2 22c1-6 6-9 9-6 3 4 9 8 10 2 1-5-4-6-9-7C6 10 1 9 3 5c3-5 10 2 15 2 5-1 5-6 1-7', '#a01020', 2) + dots(RED, [2, 22], [19, 0]),
	arc: line('M2 22Q22 18 22 3') + line('M2 3h20L2 22', RED) + '<g fill="#e0061c" stroke="none"><circle cx="2" cy="3" r="2"/><circle cx="22" cy="3" r="2"/><circle cx="2" cy="22" r="2"/></g>',
	rectangle: shape('M4 3h17v20H4z', TAUPE, '#555') + line('M4 22L20 3', '#fff', 3) + line('M4 22L20 3', RED) + dots(RED, [4, 22], [20, 3]),
	pushpull: shape('M0 17l12-6 12 5v3l-13 6-11-6z', '#77745f') + shape('M0 16l12-5 12 5-12 6z', TAUPE) + shape('M12 2l5 7h-3v7h-4V9H7z', RED, '#900'),
	offset: line('M1 2c11-6 25 6 20 22', RED, 1.5) + line('M3 12c6-6 14-2 13 8', '#111', 2) + shape('M24 1l-2 10-3-2-6 8-4-3 7-8-3-3z', RED, '#700'),
	move: shape('M12 0l4 6h-3v4h-2V6H8zM12 24l4-6h-3v-4h-2v4H8zM0 12l6-4v3h4v2H6v3zM24 12l-6-4v3h-4v2h4v3z', RED, '#800'),
	rotate: shape('M1 10C4 0 15-1 21 5l2-2v9h-9l3-3C12 4 6 6 5 10zM23 14c-3 10-14 11-20 5l-2 2v-9h9l-3 3c5 5 11 3 12-1z', RED, '#900'),
	scale: line('M1 2h22v21', '#e44', 1) + shape('M1 7h16v16H1z', TAUPE) + shape('M24 0l-2 11-3-3-6 7-4-4 6-6-3-3z', RED, '#800'),
	tape: shape('M0 21l9-8 3 3-9 7z', '#e8e000') + shape('M11 3l7-3 5 2-1 11-8 4-5-4z', '#556') + '<ellipse cx="17" cy="8" rx="4" ry="6" fill="#f4ec20" stroke="#333"/>',
	text: shape('M8 0h15v14H8z', '#fff') + line('M8 6H4v12') + shape('M1 17h6l-3 7z', '#111') + '<text x="9" y="11" font-size="10" font-family="Liberation Serif" fill="#111" stroke="none">A1</text>',
	paint: shape('M4 6C8-1 20-1 23 8c2 8-2 14-7 14-4 0-7-3-8-8z', '#686860') + shape('M9 13l12-8c4 8 1 15-4 16-4 0-7-3-8-8z', '#d8cca0') + line('M5 6c5-2 10 2 17 8', '#111', 2) + shape('M2 23C-3 13 3 6 12 9c-4 3-5 7-5 13z', '#f4ae18'),
	warehouse: pod + shape('M6 4l12-2 3 12-10 5-3-5z', '#d8242c', '#700') + line('M8 6l7-1 2 9M9 10l4-1 1 6', '#fbb', 1.8),
	warehouseup: pod + shape('M6 4l12-2 3 12-10 5-3-5z', '#681820') + line('M8 6l7-1 2 9', '#ddd', 1.8) + shape('M18 11l6 7h-3v8h-6v-8h-3z', '#18a028'),
	ruby: shape('M1 10l6-5 14 2 3 7-6 8-10 1z', '#fff') + shape('M3 14l6 7 8 1 5-6z', '#444') + shape('M3 6l5-4 9 1 5 6-8 9z', '#c8141c', '#600') + line('M3 6l8 3 11 0M11 9l3 9M8 2l3 7 6-6', '#f88'),
	layout: layoutPage + shape('M10 15h7v-4l8 7-8 6v-4h-7z', '#1c78dc'),
	extension: shape('M2 7l5-6h10l6 6-10 12z', '#c8141c', '#600') + line('M2 7h21M7 1l3 6 3 12 3-12 1-6', '#f66') + '<circle cx="18" cy="18" r="3.500" fill="#fff" stroke="#a02030" stroke-width="2.500"/>',
	user: '<circle cx="12" cy="12" r="12" stroke="#444"/><circle cx="12" cy="9" r="4.500" stroke="#444"/>' + line('M4 21c0-9 16-9 16 0', '#444'),

	xray: box('#a4bece', '#84a4b8', '#7c9eb4'),
	backedges: box('#fff', '#f8f8f8', '#fff') + '<path d="M14 1l-1 13-9 4M13 14l8 4" stroke="#999" stroke-dasharray="2 1"/>',
	wireframe: box('none', 'none', 'none') + line('M14 1l-1 12-9 5M13 13l8 5'),
	hidden: box('#fff', '#fff', '#fff'),
	shaded: box('#a8a58e', '#76735f', '#8c8974'),
	textured: box('#34332c', '#34332c', '#34332c') + line('M4 7l5 5 13-3M3 13l6 5 12-4M9 3l9 5', '#c8c4a4', 2),
	mono: box('#2488d8', '#2488d8', '#b4ac88'),
	iso: shape('M3 12L9 5l12 6v8l-8 4-9-3z', '#fff') + shape('M9 5l8-4 7 10-6 3z', TAUPE) + line('M1 14L9 5l5 9', '#111', 2) + shape('M7 15h4v7l-4-1z', '#222'),
	top: shape('M4 2h17v21H4z', TAUPE) + line('M12 2v21') + shape('M15 5h4v6h-4z', '#ccc'),
	front: shape('M1 14L12 4l11 10h-3v9H4v-9z', '#fff') + line('M1 14L12 4l11 10', '#111', 2) + shape('M10 15h5v8h-5z', '#111'),
	right: shape('M3 12h19v11H3z', '#fff') + shape('M1 12l3-6h17l3 6z', TAUPE) + shape('M13 2h5v6h-5z', '#fff'),
	back: shape('M4 13L12 5l8 8v10H4z', '#fff') + line('M1 14L12 4l11 10', '#111', 2),
	left: shape('M3 12h19v11H3z', '#fff') + shape('M1 12l3-6h17l3 6z', TAUPE) + shape('M5 4h5v3H5z', '#666'),
	outer: merged('#77745f', '#77745f', '#77745f'),
	intersect: merged('#fff', '#fff', '#55534a'),
	union: merged('#77745f', '#77745f', '#55534a'),
	subtract: merged('#77745f', '#fff', '#fff'),
	trim: merged('#2488d8', '#77745f', '#eee'),
	component: shape('M3 5l13-4 7 7-4 12-9 4L2 17z', '#ddd', '#aaa') + line('M5 7l10-3 5 5M7 10l8-2 3 3M9 14l6-1M10 24V9', '#aaa', 1.5),
	component2: shape('M1 4l12-3 10 4-2 12-12 6-4-6z', '#ddd', '#888') + line('M1 4l9 4 13-3M10 8L9 23M5 8l2 8M13 10l7-2-1 7-6 3zM4 4l9 0 6 1', '#888', 1.5),
	rotarc: shape('M0 23C-5 8 8-5 27 1l-2 8C16 6 9 13 9 21z', '#ddd') + line('M9 21L26 3M9 21l14-1 3-12', '#d66') + line('M3 21C1 10 9 2 26 4'),
	shell: shape('M2 5l8-4 10 2 3 7-4 10-8 3-7-6z', '#fff') + line('M8 2c1 7-2 9 3 20M13 2c0 7 4 9 0 20M18 4c-1 6 0 10-2 16', '#555'),
	link: line('M6 15C5-3 18-3 19 17', '#e44', 1.5) + shape('M0 12l8 1v9l-8-1z', '#28a060') + '<circle cx="19" cy="20" r="4.500" fill="#f4b818"/>',
	gem: line('M15 0l6 10 2 8-9 6-10-1-3-9 5-6zM6 8l6 3 9-1M15 0l-3 11-6 8 8 5 5-8-7-5M1 14l5 5M21 10l-2 6 4 2', '#18a030', 1.5),

	pencil: shape('M2 23l3-8L19 1l4 3L9 19z', '#a8202c') + shape('M2 23l3-8 4 4z', '#e8d0a8') + shape('M18 2l4-1 1 4-2 2-4-3z', '#888'),
	rotrect: shape('M4 2h17v20H4z', TAUPE, '#666') + line('M4 2v20h17M4 7c10 0 17 5 17 15', '#fff', 3) + line('M4 2v20h17M4 7c10 0 17 5 17 15', RED) + dots(RED, [4, 2], [4, 7], [4, 22], [21, 22]),
	circle: `<circle cx="12" cy="12" r="11" fill="${TAUPE}" stroke="#333"/>` + line('M12 12l8-8', '#fff', 3) + line('M12 12l8-8', RED) + dots(RED, [12, 12], [20, 4]),
	polygon: `<circle cx="12" cy="12" r="11" fill="#fff" stroke="#e44"/>` + shape('M2 12l5-9 12 1 3 12-10 6-8-3z', TAUPE) + line('M12 12l8-8', '#fff', 3) + line('M12 12l8-8', RED) + dots(RED, [12, 12], [20, 4]),
	arc2: shape('M7 22C-3 10 8-4 22 5', 'none') + line('M5 4l10 9M22 5L7 22', RED) + '<g fill="#e0061c" stroke="none"><circle cx="5" cy="4" r="2"/><circle cx="22" cy="5" r="2"/><circle cx="7" cy="22" r="2"/></g>',
	arc3: line('M9 1c13-2 18 16 9 20-7 4-14 0-16-6') + line('M9 1l11 19L3 15', RED) + '<g fill="#e0061c" stroke="none"><circle cx="9" cy="2" r="2"/><circle cx="20" cy="20" r="2"/><circle cx="3" cy="15" r="2"/></g>',
	pie: shape('M3 4h19Q20 20 3 22z', TAUPE) + line('M3 22L22 4', '#fff', 3) + line('M3 4h19L3 22', RED) + dots(RED, [3, 4], [22, 4], [3, 22]),
	followme: line('M4 20C0 8 9 1 22 4', '#111', 8) + line('M4 19C1 8 10 2 21 4', '#77736b', 6) + shape('M12 7l8-3-1 8 4 5-5 1-2 3-6-5 2-3z', '#b81c28', '#500'),
	dimension: line('M4 14L14 4M1 11l7 6M11 1l7 6M3 17l4-6M13 7l3-5') + line('M5 15l6 7M15 5l8 7', '#777') + dots('#3a3', [11, 22], [22, 11]) + '<text x="1" y="8" font-size="9" fill="#333" stroke="none">3</text>',
	protractor: shape('M4 22C-3 12 6-1 23 2z', '#e0d820') + shape('M6 16C4 9 9 5 17 5z', '#f0f0e8'),
	axes: line('M11 12V2', '#1858a8', 2) + shape('M11 0l3 5H8z', '#1858a8', '#1858a8') + line('M11 12l9-5', '#2a2', 2) + shape('M22 6l-6 0 2 4z', '#2a2', '#2a2') + line('M11 12l8 6', '#d22', 2) + shape('M22 20l-6-1 3-4z', '#d22', '#d22') + '<path d="M11 12v10M11 12l-8-4M11 12l-7 6" stroke="#88a" stroke-dasharray="2 1"/>' + dots('#111', [11, 12]),
	text3d: '<text x="2" y="23" font-size="28" font-weight="bold" font-family="Liberation Serif" fill="#66655c" stroke="#111">A</text>'
};
```

FILE: toolbars.js
```js
for (const toolbar of document.querySelectorAll('.toolbar')) {
	let html = '<span class="grip"></span>';
	for (const item of toolbar.dataset.tools.split(' ')) {
		if (item === '|') {
			html += '<span class="separator"></span>';
			continue;
		}
		const name = item.replace(/[*+]/, '');
		let cls = 'tool';
		if (item.endsWith('*')) cls += ' active';
		if (item.endsWith('+')) cls += ' dropdown';
		html += `<button class="${cls}" aria-label="${name}"><svg viewBox="0 0 24 24">${icons[name]}</svg></button>`;
	}
	toolbar.innerHTML = html;
}
```
